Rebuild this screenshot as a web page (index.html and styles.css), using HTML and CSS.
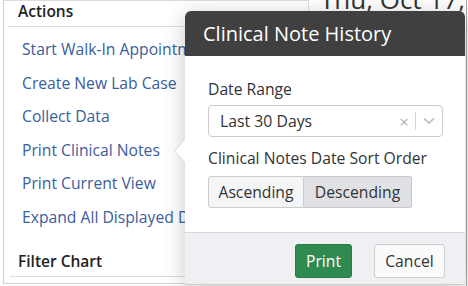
FILE: index.html
```html
<!DOCTYPE html>
<html>
<head>
<meta charset="utf-8">
<link rel="stylesheet" href="styles.css">
</head>
<body>
<div class="layout">
  <aside class="sidebar">
    <h3 class="section-title">Actions</h3>
    <ul class="links">
      <li><a>Start Walk-In Appointment</a></li>
      <li><a>Create New Lab Case</a></li>
      <li><a>Collect Data</a></li>
      <li><a>Print Clinical Notes</a></li>
      <li><a>Print Current View</a></li>
      <li><a>Expand All Displayed Data</a></li>
    </ul>
    <h3 class="section-title filter">Filter Chart</h3>
  </aside>
  <main class="calendar">
    <div class="cal-date">Thu, Oct 17,</div>
  </main>
</div>

<div class="popover">
  <svg class="arrow" width="14" height="26" viewBox="0 0 14 26">
    <polygon points="13,0 1.5,13 13,26" fill="#ffffff" stroke="#d6d6d6" stroke-width="1"/>
    <rect x="12" y="0" width="3" height="26" fill="#ffffff"/>
  </svg>
  <div class="pop-header">Clinical Note History</div>
  <div class="pop-body">
    <label class="field-label">Date Range</label>
    <div class="select">
      <span class="select-value">Last 30 Days</span>
      <span class="select-clear">×</span>
      <span class="select-sep"></span>
      <svg class="select-chevron" width="12" height="8" viewBox="0 0 12 8">
        <polyline points="1,1.5 6,6 11,1.5" fill="none" stroke="#c4c4c4" stroke-width="1.8"/>
      </svg>
    </div>
    <label class="field-label second">Clinical Notes Date Sort Order</label>
    <div class="btn-group">
      <button class="seg">Ascending</button>
      <button class="seg active">Descending</button>
    </div>
  </div>
  <div class="pop-footer">
    <button class="btn btn-primary">Print</button>
    <button class="btn btn-default">Cancel</button>
  </div>
</div>
</body>
</html>
```

FILE: styles.css
```css
html, body {
  margin: 0;
  padding: 0;
}
body {
  width: 468px;
  height: 286px;
  overflow: hidden;
  position: relative;
  background: #ffffff;
  font-family: "Open Sans", "Noto Sans", sans-serif;
  color: #333333;
}
.layout {
  display: grid;
  grid-template-columns: 306px 1fr;
  height: 286px;
  margin-left: 3px;
}
.sidebar {
  border-left: 1px solid #cfcfcf;
  border-top: 1px solid #dcdcdc;
  border-right: 1px solid #dcdcdc;
  border-bottom: 1px solid #d4d4d4;
  height: 282px;
  box-sizing: content-box;
  overflow: hidden;
}
.section-title {
  margin: 0 0 0 4px;
  padding: 0 0 5px 10px;
  font-size: 15.5px;
  line-height: 20px;
  font-weight: 600;
  color: #222222;
  border-bottom: 1px solid #dddddd;
}
.section-title.filter {
  margin-top: 16px;
  margin-left: 6px;
  padding-left: 8px;
}
.links {
  list-style: none;
  margin: 6px 0 0 0;
  padding: 0 0 0 18px;
}
.links li {
  line-height: 33.6px;
  height: 33.6px;
  font-size: 15.7px;
  white-space: nowrap;
}
.links a {
  color: #3a5d9c;
}
.calendar {
  border-right: 1px solid #a8a8a8;
  margin-right: 1px;
  overflow: hidden;
}
.cal-date {
  margin-top: -14px;
  padding-left: 11px;
  font-size: 26px;
  line-height: 26px;
  color: #333333;
  white-space: nowrap;
}

/* Popover */
.popover {
  position: absolute;
  left: 185px;
  top: 11px;
  width: 280px;
  height: 273px;
  background: #ffffff;
  border-radius: 6px 6px 0 0;
  box-shadow: 0 4px 22px rgba(0, 0, 0, 0.22);
  border-bottom: 1px solid #cccccc;
  display: flex;
  flex-direction: column;
}
.arrow {
  position: absolute;
  left: -12px;
  top: 127px;
}
.pop-header {
  height: 45px;
  background: #404040;
  color: #ffffff;
  font-size: 20px;
  line-height: 45px;
  padding-left: 18px;
  border-radius: 6px 6px 0 0;
}
.pop-body {
  padding: 22px 22px 0 23px;
  flex: 1;
  display: flex;
  flex-direction: column;
  align-items: flex-start;
}
.field-label {
  font-size: 15.7px;
  line-height: 22px;
  color: #333333;
}
.field-label.second {
  margin-top: 10px;
}
.select {
  margin-top: 5px;
  width: 235px;
  height: 32px;
  box-sizing: border-box;
  border: 1px solid #cccccc;
  border-radius: 4px;
  display: flex;
  align-items: center;
  padding-left: 11px;
  padding-right: 7px;
}
.select-value {
  flex: 1;
  font-size: 15.8px;
  color: #333333;
}
.select-clear {
  font-size: 17px;
  color: #b3b3b3;
  margin-right: 6px;
}
.select-sep {
  width: 1px;
  height: 18px;
  background: #d6d6d6;
  margin-right: 7px;
}
.select-chevron {
  display: block;
}
.btn-group {
  margin-top: 7px;
  display: flex;
}
.seg {
  font-family: inherit;
  font-size: 15.7px;
  color: #333333;
  height: 32px;
  border: 1px solid #cccccc;
  background: #f4f5f7;
  padding: 0;
  margin: 0;
}
.seg:first-child {
  width: 96px;
  border-radius: 3px 0 0 3px;
}
.seg.active {
  width: 108px;
  background: #dfe1e5;
  border-left: none;
  border-radius: 0 3px 3px 0;
  border-color: #c4c6ca;
}
.pop-footer {
  height: 52px;
  box-sizing: border-box;
  border-top: 1px solid #d6d6d6;
  background: #eff0f3;
  display: flex;
  justify-content: flex-end;
  align-items: flex-start;
  gap: 22px;
  padding: 11px 20px 0 0;
}
.btn {
  font-family: inherit;
  font-size: 15.7px;
  height: 34px;
  border-radius: 3px;
  padding: 0;
  margin: 0;
}
.btn-primary {
  width: 57px;
  background: #2f8a4f;
  border: 1px solid #2a7c47;
  color: #ffffff;
}
.btn-default {
  width: 71px;
  background: #fafafa;
  border: 1px solid #cccccc;
  color: #333333;
}
```
